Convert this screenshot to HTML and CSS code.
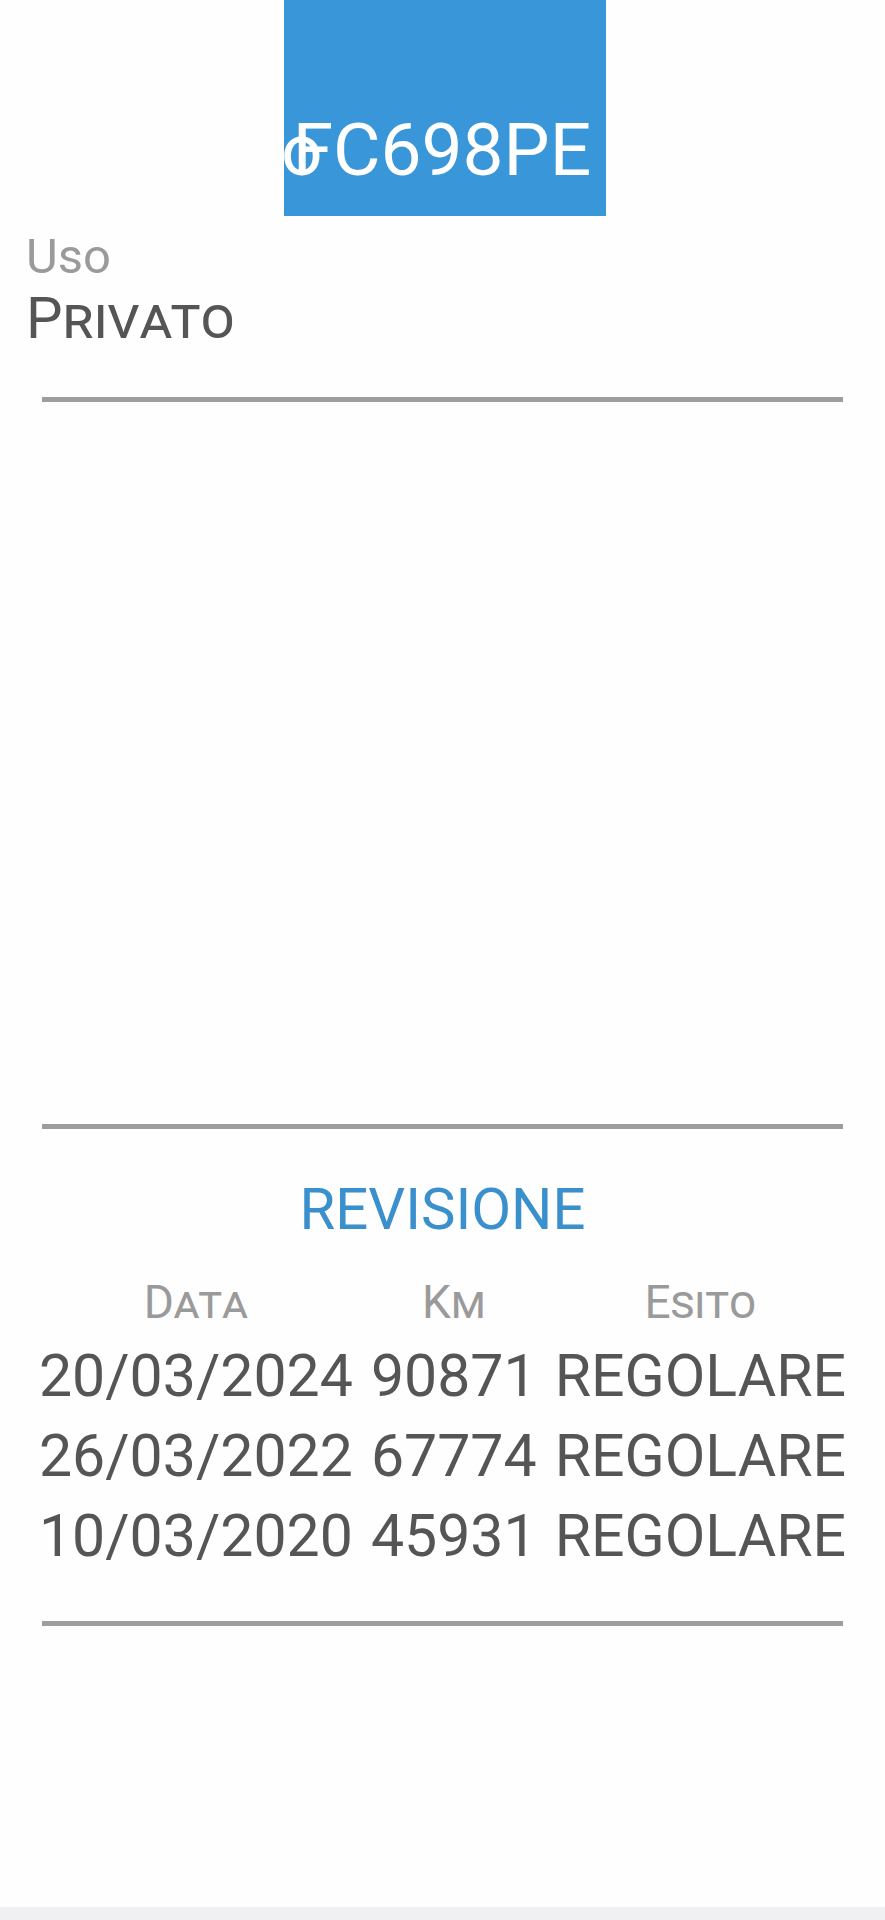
FILE: index.html
```html
<!DOCTYPE html>
<html lang="it">
<head>
<meta charset="utf-8">
<title>Veicolo</title>
<link rel="stylesheet" href="styles.css">
</head>
<body>
<div class="page">
  <main class="content">
    <div class="plate"><span class="plate-text"><span class="ghost">o</span>FC698PE</span></div>
    <section class="field">
      <div class="label">Uso</div>
      <div class="value">Privato</div>
    </section>
    <hr class="divider divider-top">
    <div class="blank"></div>
    <hr class="divider">
    <section class="revision">
      <h2 class="title">REVISIONE</h2>
      <table class="rev-table">
        <thead>
          <tr><th>Data</th><th>Km</th><th>Esito</th></tr>
        </thead>
        <tbody>
          <tr><td>20/03/2024</td><td>90871</td><td>REGOLARE</td></tr>
          <tr><td>26/03/2022</td><td>67774</td><td>REGOLARE</td></tr>
          <tr><td>10/03/2020</td><td>45931</td><td>REGOLARE</td></tr>
        </tbody>
      </table>
    </section>
    <hr class="divider divider-bottom">
  </main>
  <div class="nav-bar"></div>
</div>
</body>
</html>
```
FILE: styles.css
```css
* { box-sizing: border-box; }
html, body {
  margin: 0;
  padding: 0;
  background: #fefefe;
  font-family: Roboto, "Liberation Sans", sans-serif;
}
.page {
  display: flex;
  flex-direction: column;
  min-height: 1920px;
}
.content {
  flex: 1;
  display: flex;
  flex-direction: column;
}
.plate {
  margin-left: 284px;
  width: 322px;
  height: 216px;
  background: #3996d8;
  display: flex;
  align-items: flex-end;
  padding-bottom: 29px;
  white-space: nowrap;
}
.plate-text {
  margin-left: -3px;
  color: #ffffff;
  font-size: 73px;
  line-height: 73px;
}
.ghost {
  margin-right: -30px;
}
.field {
  padding: 13px 26px 0;
}
.label {
  font-size: 49px;
  line-height: 56px;
  color: #9a9a9a;
}
.value {
  margin-top: 0;
  font-size: 58px;
  line-height: 66px;
  color: #555555;
  font-variant: small-caps;
}
.divider {
  margin: 0 42px;
  height: 5px;
  border: 0;
  background: #9d9d9d;
}
.divider-top {
  margin-top: 46px;
}
.blank {
  height: 722px;
}
.revision {
  display: flex;
  flex-direction: column;
  align-items: center;
  padding-top: 46px;
}
.title {
  margin: 0;
  font-size: 58px;
  line-height: 68px;
  font-weight: 400;
  color: #3a90cd;
}
.rev-table {
  margin-top: 26px;
  border-collapse: collapse;
}
.rev-table th {
  padding: 0 9px;
  font-size: 46px;
  line-height: 67px;
  font-weight: 400;
  color: #9a9a9a;
  font-variant: small-caps;
  text-align: center;
}
.rev-table td {
  padding: 0 9px;
  font-size: 59px;
  line-height: 80px;
  color: #555555;
  text-align: center;
  white-space: nowrap;
}
.divider-bottom {
  margin-top: 45px;
}
.nav-bar {
  height: 13px;
  background: #f0f0f2;
}
```
